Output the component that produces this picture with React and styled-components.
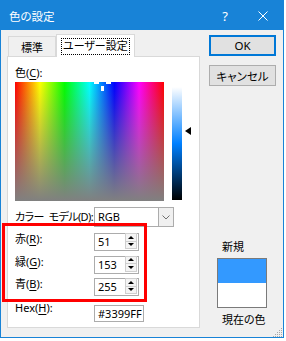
import styled, { createGlobalStyle } from 'styled-components';

const GlobalStyle = createGlobalStyle`
  html, body {
    margin: 0;
    background: #fff;
  }
  body {
    font-family: "Noto Sans", "Noto Sans CJK JP", sans-serif;
    font-size: 11px;
    color: #000;
    font-feature-settings: "palt" 1;
  }
  u {
    text-underline-offset: 2px;
  }
`;

const fields = [
  { label: '赤', key: 'R', value: 51 },
  { label: '緑', key: 'G', value: 153 },
  { label: '青', key: 'B', value: 255 },
];

const App = () => {
  return (<>
    <GlobalStyle />
    <Window>
      <TitleBar>
        <Title>色の設定</Title>
        <TitleButton $w={36}>?</TitleButton>
        <TitleButton $w={40}>
          <svg width="10" height="10" viewBox="0 0 10 10">
            <path d="M0.5 0.5 L9.5 9.5 M9.5 0.5 L0.5 9.5" stroke="#fff" strokeWidth="1" />
          </svg>
        </TitleButton>
      </TitleBar>
      <Body>
        <LeftCol>
          <TabStrip>
            <Tab>標準</Tab>
            <ActiveTab><Focus>ユーザー設定</Focus></ActiveTab>
          </TabStrip>
          <Panel>
            <Caption>色(<u>C</u>):</Caption>
            <PickerRow>
              <Spectrum>
                <Cross style={{ left: 79, top: 0, width: 5, height: 2 }} />
                <Cross style={{ left: 91, top: 0, width: 5, height: 2 }} />
                <Cross style={{ left: 86, top: 4, width: 3, height: 5 }} />
              </Spectrum>
              <LumBar />
              <LumArrow />
            </PickerRow>
            <Row $mt={6} $h={20}>
              <Label $shift={2} $tight>カラー{'\u2002'}モデル(<u>D</u>):</Label>
              <Combo>
                <ComboText>RGB</ComboText>
                <DropButton>
                  <svg width="8" height="5" viewBox="0 0 8 5">
                    <path d="M0.5 0.5 L4 4 L7.5 0.5" fill="none" stroke="#707070" strokeWidth="1" />
                  </svg>
                </DropButton>
              </Combo>
            </Row>
            {fields.map((f, i) =>
              <Row key={f.key} $mt={i === 0 ? 6 : 4.5} $h={18}>
                <Label $shift={-2}>{f.label}(<u>{f.key}</u>):</Label>
                <SpinBox>
                  <SpinValue>{f.value}</SpinValue>
                  <Spin>
                    <SpinBtn><Tri $up /></SpinBtn>
                    <SpinBtn><Tri /></SpinBtn>
                  </Spin>
                </SpinBox>
              </Row>
            )}
            <Row $mt={8.5} $h={17}>
              <Label $shift={-5}>Hex(<u>H</u>):</Label>
              <HexBox>#3399FF</HexBox>
            </Row>
          </Panel>
        </LeftCol>
        <RightCol>
          <div>
            <Button $primary>OK</Button>
            <Button>キャンセル</Button>
          </div>
          <Preview>
            <PreviewLabel>新規</PreviewLabel>
            <Swatch>
              <SwatchHalf $color="#3399ff" />
              <SwatchHalf $color="#ffffff" />
            </Swatch>
            <PreviewLabel $mt={4}>現在の色</PreviewLabel>
          </Preview>
        </RightCol>
      </Body>
      <Grip>
        <svg width="11" height="11" viewBox="0 0 11 11">
          <g fill="#a8a8a8">
            <rect x="9" y="1" width="1" height="1" />
            <rect x="7" y="3" width="1" height="1" />
            <rect x="9" y="3" width="1" height="1" />
            <rect x="5" y="5" width="1" height="1" />
            <rect x="7" y="5" width="1" height="1" />
            <rect x="9" y="5" width="1" height="1" />
            <rect x="3" y="7" width="1" height="1" />
            <rect x="5" y="7" width="1" height="1" />
            <rect x="7" y="7" width="1" height="1" />
            <rect x="9" y="7" width="1" height="1" />
            <rect x="1" y="9" width="1" height="1" />
            <rect x="3" y="9" width="1" height="1" />
            <rect x="5" y="9" width="1" height="1" />
            <rect x="7" y="9" width="1" height="1" />
            <rect x="9" y="9" width="1" height="1" />
          </g>
        </svg>
      </Grip>
      <Annotation />
    </Window>
  </>);
};

const Window = styled.div`
  position: relative;
  width: 284px;
  height: 338px;
  box-sizing: border-box;
  border: 1px solid #1883d7;
  background: #f0f0f0;
  display: flex;
  flex-direction: column;
`;

const TitleBar = styled.div`
  height: 29px;
  display: flex;
  align-items: center;
  background: #1883d7;
  color: #fff;
  padding-left: 8px;
`;

const Title = styled.div`
  flex: 1;
  font-size: 11.5px;
`;

const TitleButton = styled.div`
  width: ${p => p.$w}px;
  height: 29px;
  display: flex;
  align-items: center;
  justify-content: center;
  font-size: 13px;
`;

const Body = styled.div`
  flex: 1;
  display: flex;
  gap: 9px;
  padding: 4px 7px 9px 6px;
`;

const LeftCol = styled.div`
  width: 193px;
  display: flex;
  flex-direction: column;
`;

const TabStrip = styled.div`
  height: 22px;
  display: flex;
  align-items: flex-end;
  padding-left: 1px;
`;

const Tab = styled.div`
  height: 20px;
  box-sizing: border-box;
  padding: 0 12px;
  border: 1px solid #d9d9d9;
  border-bottom: none;
  background: #f0f0f0;
  display: flex;
  align-items: center;
`;

const ActiveTab = styled.div`
  position: relative;
  z-index: 1;
  height: 23px;
  margin-bottom: -1px;
  box-sizing: border-box;
  padding: 0 4px;
  border: 1px solid #d9d9d9;
  border-bottom: none;
  background: #fff;
  display: flex;
  align-items: center;
`;

const Focus = styled.div`
  height: 15px;
  line-height: 14px;
  padding: 0 1px;
  border: 1px dotted #000;
`;

const Panel = styled.div`
  flex: 1;
  background: #fff;
  border: 1px solid #d9d9d9;
  padding: 8px 0 0 7px;
`;

const Caption = styled.div`
  height: 17px;
  line-height: 16px;
`;

const PickerRow = styled.div`
  display: flex;
  height: 119px;
`;

const Spectrum = styled.div`
  position: relative;
  overflow: hidden;
  width: 149px;
  height: 119px;
  background:
    linear-gradient(to bottom, rgba(128,128,128,0), rgba(128,128,128,1)),
    linear-gradient(to right, #ff0000, #ffff00 16.7%, #00ff00 33.3%, #00ffff 50%, #0000ff 66.7%, #ff00ff 83.3%, #ff0000);
`;

const Cross = styled.div`
  position: absolute;
  background: #fff;
`;

const LumBar = styled.div`
  width: 10px;
  height: 113px;
  margin: 5px 0 0 8px;
  background: linear-gradient(to bottom, #ffffff, #0080ff 50%, #000000);
`;

const LumArrow = styled.div`
  width: 0;
  height: 0;
  margin: 45px 0 0 3px;
  border-right: 6px solid #000;
  border-top: 4px solid transparent;
  border-bottom: 4px solid transparent;
`;

const Row = styled.div`
  display: flex;
  align-items: flex-start;
  height: ${p => p.$h}px;
  margin-top: ${p => p.$mt}px;
`;

const Label = styled.div`
  width: 79px;
  flex: none;
  line-height: 16px;
  margin-top: ${p => p.$shift}px;
  letter-spacing: ${p => p.$tight ? '-0.6px' : '0'};
  white-space: nowrap;
`;

const Combo = styled.div`
  width: 80px;
  height: 20px;
  box-sizing: border-box;
  border: 1px solid #acacac;
  background: #fff;
  display: flex;
`;

const ComboText = styled.div`
  flex: 1;
  padding-left: 3px;
  line-height: 18px;
`;

const DropButton = styled.div`
  width: 14px;
  border-left: 1px solid #acacac;
  background: #f0f0f0;
  display: flex;
  align-items: center;
  justify-content: center;
`;

const SpinBox = styled.div`
  width: 45px;
  height: 18px;
  box-sizing: border-box;
  border: 1px solid #acacac;
  background: #fff;
  display: flex;
`;

const SpinValue = styled.div`
  flex: 1;
  padding-left: 3px;
  line-height: 16px;
`;

const Spin = styled.div`
  width: 12px;
  margin: 0 1px 1px 0;
  display: flex;
  flex-direction: column;
`;

const SpinBtn = styled.div`
  flex: 1;
  border: 1px solid #cfcfcf;
  margin-top: -1px;
  background: #f4f4f4;
  display: flex;
  align-items: center;
  justify-content: center;
`;

const Tri = styled.div`
  width: 0;
  height: 0;
  border-left: 3px solid transparent;
  border-right: 3px solid transparent;
  ${p => p.$up ? 'border-bottom: 3px solid #000;' : 'border-top: 3px solid #000;'}
`;

const HexBox = styled.div`
  width: 50px;
  height: 17px;
  box-sizing: border-box;
  border: 1px solid #acacac;
  background: #fff;
  padding-left: 3px;
  line-height: 15px;
`;

const RightCol = styled.div`
  width: 67px;
  display: flex;
  flex-direction: column;
  justify-content: space-between;
`;

const Button = styled.div`
  height: 21px;
  box-sizing: border-box;
  margin-top: ${p => p.$primary ? 1 : 9}px;
  border: 1px solid ${p => p.$primary ? '#0078d7' : '#adadad'};
  box-shadow: ${p => p.$primary ? 'inset 0 0 0 1px #0078d7' : 'none'};
  background: #e1e1e1;
  display: flex;
  align-items: center;
  justify-content: center;
  font-size: 11.5px;
`;

const Preview = styled.div`
  display: flex;
  flex-direction: column;
`;

const PreviewLabel = styled.div`
  line-height: 16px;
  padding-left: 13px;
  margin-top: ${p => p.$mt || 0}px;
`;

const Swatch = styled.div`
  width: 50px;
  height: 50px;
  box-sizing: border-box;
  margin: 3px 0 0 8px;
  border: 1px solid #7a7a7a;
  display: flex;
  flex-direction: column;
`;

const SwatchHalf = styled.div`
  flex: 1;
  background: ${p => p.$color};
`;

const Grip = styled.div`
  position: absolute;
  right: 0;
  bottom: 0;
  width: 11px;
  height: 11px;
`;

const Annotation = styled.div`
  position: absolute;
  left: 1px;
  top: 222px;
  width: 145px;
  height: 79px;
  box-sizing: border-box;
  border: 3px solid #ff0000;
  pointer-events: none;
`;

export default App
